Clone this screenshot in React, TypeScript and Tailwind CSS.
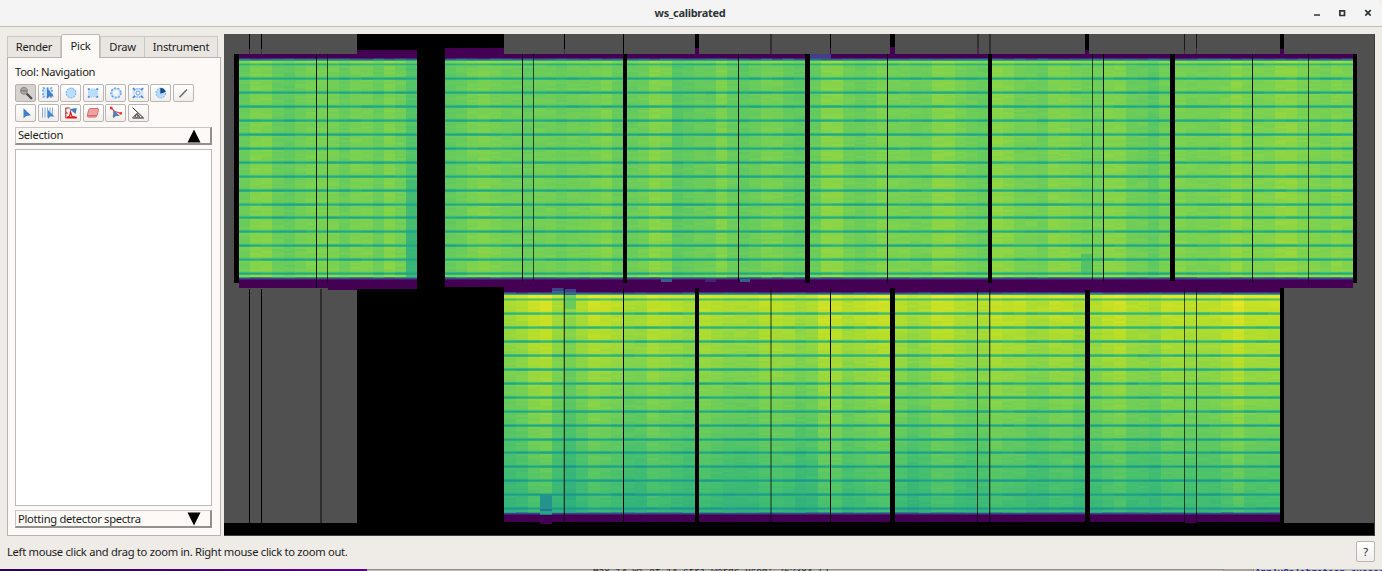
import React from "react";

const VIRIDIS: [number, number, number][] = [
  [68, 1, 84], [72, 36, 117], [65, 68, 135], [53, 95, 141], [42, 120, 142],
  [33, 145, 140], [34, 168, 132], [68, 191, 112], [122, 209, 81], [189, 223, 38], [253, 231, 37],
];
function viridis(v: number) {
  const t = Math.max(0, Math.min(0.9999, v)) * 10;
  const i = Math.floor(t);
  const f = t - i;
  const c = VIRIDIS[i].map((a, k) => Math.round(a + (VIRIDIS[i + 1][k] - a) * f));
  return `rgb(${c[0]},${c[1]},${c[2]})`;
}
function noise(a: number, b: number) {
  const s = Math.sin(a * 127.1 + b * 311.7) * 43758.5453;
  return s - Math.floor(s) - 0.5;
}

type Bank = { x0: number; x1: number; levels: string; lower?: boolean; boost?: number };
const BANKS: Bank[] = [
  { x0: 239, x1: 417, levels: "4774356664664751" },
  { x0: 445, x1: 623, levels: "3467655455455674" },
  { x0: 627, x1: 805, levels: "4587234474346643" },
  { x0: 810, x1: 988, levels: "4885457665588654" },
  { x0: 992, x1: 1170, levels: "8755477655774425", boost: 0.006 },
  { x0: 1175, x1: 1353, levels: "6555686668866576", boost: 0.01 },
  { x0: 504, x1: 695, levels: "4589425876447654", lower: true },
  { x0: 699, x1: 890, levels: "6544466534885678", lower: true, boost: 0.004 },
  { x0: 895, x1: 1085, levels: "5347754576644664", lower: true, boost: 0.01 },
  { x0: 1090, x1: 1280, levels: "4674436655579666", lower: true, boost: 0.016 },
];

function BankView({ x0, x1, levels, lower, boost = 0 }: Bank) {
  const out: React.ReactElement[] = [];
  const n = 16;
  const w = (x1 - x0) / n;
  const top = lower ? 294 : 60;
  const first = lower ? 299 : 64;
  const pitch = 13.95;
  const put = (x: number, xe: number, y: number, h: number, v: number) =>
    out.push(<rect key={out.length} x={x} y={y} width={xe - x} height={h} fill={viridis(v)} />);
  for (let c = 0; c < n; c++) {
    const xa = Math.round(x0 + c * w);
    const xb = Math.round(x0 + (c + 1) * w);
    const d = (Number(levels[c]) - 5) * 0.013 + boost;
    const at = (k: number) => (lower ? 0.888 - k * 0.0152 : 0.775 + k * 0.0012) + d;
    put(xa, xb, top - 2, 1, 0.13 + noise(c, x0) * 0.08);
    put(xa, xb, top - 1, 1, 0.36 + noise(c, x0) * 0.16);
    put(xa, xb, top, 1, 0.6);
    put(xa, xb, top + 1, first - top - 2, at(0) + 0.05);
    for (let k = 0; k < 16; k++) {
      const y = Math.round(first + k * pitch);
      const v = at(k);
      const stripe = 0.59 + (v - 0.78) * 0.55 + noise(c + 3, k) * 0.04;
      const last = k === 15;
      put(xa, xb, y - 1, 1, stripe + (k ? 0.09 : 0.14));
      put(xa, xb, y, 1, stripe + (k ? 0 : 0.05));
      put(xa, xb, y + 1, 1, stripe + (k ? 0.06 : 0.14));
      if (last) {
        put(xa, xb, y + 2, 2, v + (lower ? -0.01 : 0.03));
        put(xa, xb, y + 4, 1, 0.5 + noise(c, x0) * 0.2);
        put(xa, xb, y + 5, 1, 0.2);
        put(xa, xb, y + 6, 1, 0.08);
      } else {
        for (let r = 0; r < 6; r++) {
          put(xa, xb, y + 2 + r * 2, 2, v + noise(c + x0, k * 6 + r) * 0.022 - r * (lower ? 0.0015 : 0));
        }
        const ny = Math.round(first + (k + 1) * pitch);
        put(xa, xb, ny - 2, 1, v - 0.015);
      }
    }
  }
  return <g>{out}</g>;
}

type Box = [number, number, number, number];
const boxes = (list: Box[], fill: string, opacity = 1) =>
  list.map(([x, y, w, h], i) => <rect key={fill + i} x={x} y={y} width={w} height={h} fill={fill} opacity={opacity} />);

const PURPLE = "#440154";

function DetectorMap() {
  return (
    <svg width="1151" height="502" viewBox="224 34 1151 502" shapeRendering="crispEdges" className="block">
      <rect x="224" y="34" width="1151" height="502" fill="#000" />
      {boxes([[224, 34, 133, 489], [504, 34, 871, 20], [1284, 280, 91, 243], [1353, 54, 22, 230]], "#505050")}
      {boxes([[239, 54, 178, 234], [328, 288, 89, 1], [357, 50, 60, 6], [445, 48, 59, 6], [445, 54, 908, 233], [504, 280, 780, 242], [1284, 287, 69, 1]], PURPLE)}
      {boxes([[328, 288, 29, 2], [540, 519, 12, 5], [1185, 522, 12, 1]], PURPLE)}
      {BANKS.map((b) => <BankView key={b.x0 + (b.lower ? "l" : "u")} {...b} />)}
      {boxes([[810, 54, 21, 4]], "#433e85")}
      {boxes([[810, 58, 21, 1]], "#3d4e8a")}
      {boxes([[552, 288, 12, 3], [564, 289, 12, 3]], "#404387")}
      {boxes([[552, 291, 12, 3], [564, 292, 12, 3]], "#2f6b8e")}
      {boxes([[564, 295, 12, 14]], "#52c569", 0.65)}
      {boxes([[661, 279, 11, 3], [740, 279, 10, 3]], "#355f8d")}
      {boxes([[705, 279, 11, 3]], "#443a83", 0.6)}
      {boxes([[540, 494, 12, 15]], "#24938b")}
      {boxes([[540, 509, 12, 2]], "#2c738e")}
      {boxes([[540, 511, 12, 3]], "#22a884")}
      {boxes([[540, 514, 12, 1]], "#2f6b8e")}
      {boxes([[1081, 254, 11, 19]], "#35b779", 0.55)}
      {boxes([[406, 180, 11, 98]], "#22a884", 0.35)}
      {boxes([[406, 230, 11, 48]], "#22a884", 0.35)}

      {boxes([[234, 54, 5, 229], [623, 54, 4, 229], [805, 54, 5, 229], [988, 54, 4, 229], [1170, 54, 5, 227], [1353, 54, 4, 229]], "#000")}
      {boxes([[695, 288, 4, 235], [890, 288, 5, 235], [1085, 290, 5, 233], [1280, 288, 4, 235]], "#000")}
      {boxes([[417, 34, 28, 489]], "#000")}
      {boxes([[695, 34, 4, 14], [890, 34, 5, 13], [1085, 34, 4, 16], [1280, 34, 4, 15]], "#000")}
      {boxes([[695, 48, 4, 6], [890, 47, 5, 7], [1085, 50, 4, 4], [1280, 49, 4, 5], [830, 48, 1, 6]], PURPLE)}
      {boxes([[249, 34, 1, 15], [261, 34, 1, 15], [564, 34, 1, 15], [623, 34, 1, 20], [830, 34, 1, 14]], "#000")}
      {boxes([[770, 34, 2, 15], [977, 34, 2, 14], [989, 34, 2, 20]], "#000", 0.4)}
      {boxes([[1184, 34, 1, 16], [1196, 34, 1, 14]], "#000", 0.7)}
      {boxes([[249, 49, 1, 5], [261, 49, 1, 5], [564, 49, 1, 5], [770, 49, 2, 5], [977, 48, 2, 6], [1184, 50, 1, 4], [1196, 48, 1, 6]], PURPLE, 0.55)}
      {boxes([[316, 54, 1, 234], [738, 54, 1, 229], [887, 54, 1, 229], [1103, 54, 1, 228], [1252, 54, 1, 229], [522, 54, 1, 228]], "#000", 0.9)}
      {boxes([[327, 54, 1, 229], [533, 54, 1, 227], [1092, 54, 1, 226], [1308, 54, 1, 229]], "#000", 0.65)}
      {boxes([[249, 289, 1, 234], [261, 289, 1, 234]], "#000")}
      {boxes([[320, 289, 2, 234]], "#000", 0.45)}
      {boxes([[623, 288, 1, 234], [830, 288, 1, 234]], "#000")}
      {boxes([[564, 288, 1, 234], [977, 288, 1, 234], [989, 288, 1, 234], [1184, 288, 1, 234], [1196, 288, 1, 234]], "#000", 0.68)}
      {boxes([[770, 288, 2, 234]], "#000", 0.38)}
      {boxes([[563, 288, 1, 234], [990, 288, 1, 234]], "#000", 0.22)}
      {boxes([[224, 535, 1151, 1], [1374, 34, 1, 502]], "#3c3c3c")}
    </svg>
  );
}

const ICONS: React.ReactNode[] = [
  <g key="zoom">
    <path d="M8.8 8.8 L13.3 13.2" stroke="#4c4c4c" strokeWidth="2.3" strokeLinecap="round" />
    <circle cx="6" cy="5.8" r="3.5" fill="#a5a5a3" stroke="#8c8c8a" />
    <path d="M3 5.8h6" stroke="#74746f" />
  </g>,
  <g key="edit">
    <rect x="3" y="3" width="9" height="9" fill="#c9e4ff" stroke="#3d84dc" strokeWidth="1.2" strokeDasharray="2 1.6" />
    <path d="M7 2.5 L7 13.8 L9.5 11.6 L13.8 11.5 Z" fill="#427fc6" />
  </g>,
  <circle key="ellipse" cx="8" cy="8" r="4.9" fill="#b9ddff" stroke="#6fa8f0" strokeDasharray="2 1" />,
  <g key="rect">
    <rect x="3.5" y="4" width="9" height="8" fill="#b9ddff" stroke="#a4cdf8" strokeDasharray="1.5 1" />
    <path d="M2.8 3.2h1.8v1.8h-1.8zM11.4 3.2h1.8v1.8h-1.8zM2.8 11h1.8v1.8h-1.8zM11.4 11h1.8v1.8h-1.8z" fill="#4e8be0" />
  </g>,
  <g key="ring" fill="none">
    <circle cx="8" cy="8" r="4.2" stroke="#b9dcff" strokeWidth="2.2" />
    <circle cx="8" cy="8" r="5" stroke="#5a96e8" strokeWidth="1.2" strokeDasharray="2 1.5" />
  </g>,
  <g key="rectring" fill="none">
    <rect x="3.8" y="4.2" width="8.4" height="7.6" stroke="#c4e1ff" strokeWidth="2" />
    <path d="M2.8 3.2l2.4 2M13.2 3.2l-2.4 2M2.8 12.8l2.4-2M13.2 12.8l-2.4-2" stroke="#4e83ca" strokeWidth="1.5" />
    <path d="M6.5 3.8h1M9 3.8h1M6.5 12.2h1M9 12.2h1" stroke="#5a96e8" />
    <circle cx="8" cy="8" r="2" fill="#fff" stroke="#5f9bea" />
  </g>,
  <g key="sector">
    <circle cx="7.8" cy="8" r="4.9" fill="#b7dafc" stroke="#83b6ed" strokeDasharray="2 1" />
    <path d="M7.3 8.7V3.1A5.4 5.4 0 0 1 12.6 7Z" fill="#174b87" />
  </g>,
  <path key="pen" d="M4.5 12.3 L12 4.4" stroke="#6a6a6a" strokeWidth="1.5" />,
  <path key="single" d="M5.5 3.2 L5.5 13.2 L8.3 11 L13 10.2 Z" fill="#3f7fcb" />,
  <g key="tube">
    <path d="M2.5 2.5v10M5 2.5v10M7.5 2.5v10M10 2.5v8M12.5 2.5v9" stroke="#78a2d8" strokeWidth="0.9" />
    <path d="M8 5v9l2.2-2.4H14.5Z" fill="#4785cc" />
  </g>,
  <g key="peak">
    <path d="M3.4 12.6h10.4" stroke="#e01212" strokeWidth="1.8" fill="none" />
    <path d="M4.5 12l2-.6 1-4.6 1.6 4.8 3.4.5" fill="none" stroke="#e41818" strokeWidth="1.2" />
    <path d="M2.8 2.8v10.5M2.8 3h4M2.8 8h2" stroke="#a32222" strokeWidth="1" fill="none" />
    <path d="M6.5 4l7.3 -1-1.2 6Z" fill="#427fc1" />
  </g>,
  <g key="erase">
    <path d="M5.5 3.5h6.5q1.8 0 1.4 1.4l-1.3 5.6q-.4 1.6-2.1 1.6H3.7q-1.8 0-1.4-1.4l1.3-5.5Q4 3.5 5.5 3.5Z" fill="#eda3a3" stroke="#d96b6b" />
    <path d="M2.6 10.6h9" stroke="#cf6666" />
  </g>,
  <g key="compare">
    <path d="M3.2 2.8l3.3 3.6 6.5 2M6.5 6.4L5.3 12" stroke="#f15252" strokeWidth="1.4" fill="none" />
    <path d="M5.3 4.8v8.7l2.5-2.5h4Z" fill="#4c80bb" />
    <path d="M2 1.8h2.4v2.4H2zM11.6 7.2h2.4v2.4h-2.4z" fill="#f52626" />
  </g>,
  <g key="angle" fill="none" stroke="#242424">
    <path d="M2.5 2.5L13.5 13H2.5M3 12.5L7.5 8M6 9.5q3.5 0 3.5 3" />
    <circle cx="6.7" cy="11" r="1.4" stroke="#555" />
  </g>,
];

function ToolButton({ index }: { index: number }) {
  return (
    <button
      className={`flex h-[18px] w-[21px] items-center justify-center rounded-[2px] border ${
        index === 0 ? "border-[#b5b1ac] bg-[#d6d2ce]" : "border-[#bab6b2] bg-gradient-to-b from-white to-[#f0edea]"
      }`}
    >
      <svg width="16" height="16" viewBox="0 0 16 16" className="shrink-0">{ICONS[index]}</svg>
    </button>
  );
}

function SectionHeader({ label, up }: { label: string; up?: boolean }) {
  return (
    <div className="flex h-[18px] w-[197px] items-center justify-between border border-r-2 border-b-2 border-[#c9c5c1] border-r-[#93918b] border-b-[#93918b] bg-[#fcf9f6] pr-[9px] pl-[2px]">
      <span className={`leading-none whitespace-nowrap ${up ? "pb-[1px]" : "pt-[1px]"}`}>{label}</span>
      <svg width="14" height="14" viewBox="0 0 14 14" className="shrink-0">
        <path d={up ? "M7 0.5L13.5 13.5H.5Z" : "M7 13.5L13.5.5H.5Z"} fill="#000" />
      </svg>
    </div>
  );
}

export default function App() {
  const tab = "flex items-center justify-center border border-b-0 border-[#cbc7c2] bg-[#e9e6e2] h-[21px] pb-[1px]";
  return (
    <div className="flex h-[571px] w-[1382px] flex-col overflow-hidden bg-[#efebe7] font-['Noto_Sans',sans-serif] text-[11.2px] leading-none tracking-[-0.29px] text-[#1c1c1c]">
      <header className="flex h-[27px] shrink-0 items-center rounded-tr-[5px] border-b border-[#bfbdba] bg-[#f4f4f4]">
        <div className="w-[1300px] pb-[1px] pl-[80px] text-center text-[11px] font-bold tracking-[-0.3px] text-[#303436]">ws_calibrated</div>
        <svg width="82" height="26" viewBox="1300 0 82 26" fill="none" stroke="#2e3436" strokeWidth="1.7">
          <path d="M1314 15h6M1339.9 10.9h4.6v4.6h-4.6zM1365.3 10.2l5.4 5.4M1370.7 10.2l-5.4 5.4" />
        </svg>
      </header>

      <div className="flex h-[509px] shrink-0 pt-[7px] pl-[7px]">
        <aside className="flex w-[217px] flex-col">
          <div className="flex h-[23px] items-end">
            <div className={`${tab} w-[54px]`}>Render</div>
            <div className="z-10 -mb-px flex h-[24px] w-[39px] items-center justify-center rounded-t-[2px] border border-b-0 border-[#bdb8b3] bg-[#fcf9f6] pb-[2px]">Pick</div>
            <div className={`${tab} w-[45px]`}>Draw</div>
            <div className={`${tab} w-[73px] border-l-0`}>Instrument</div>
          </div>
          <div className="flex h-[479px] w-[214px] flex-col border border-[#b7b3af] bg-[#fcf9f6] pl-[7px]">
            <div className="mt-[7px] h-[19px] leading-[14px]">Tool: Navigation</div>
            <div className="grid w-[180px] grid-cols-[repeat(8,22.5px)] gap-y-[2px]">
              {ICONS.map((_, i) => <ToolButton key={i} index={i} />)}
            </div>
            <div className="mt-[5px]"><SectionHeader label="Selection" up /></div>
            <div className="mt-[4px] h-[357px] w-[197px] border border-[#bdb9b4] bg-white" />
            <div className="mt-[4px]"><SectionHeader label="Plotting detector spectra" /></div>
          </div>
        </aside>
        <main className="h-[502px] w-[1151px]"><DetectorMap /></main>
      </div>

      <footer className="flex h-[33px] shrink-0 items-center justify-between pr-[7px] pl-[7px]">
        <span className="whitespace-nowrap pb-[2px]">Left mouse click and drag to zoom in. Right mouse click to zoom out.</span>
        <button className="mb-[2px] flex h-[21px] w-[19px] items-center justify-center rounded-[2px] border border-[#b9b5b0] bg-gradient-to-b from-white to-[#f1efec]">?</button>
      </footer>
      <div className="flex h-[2px] shrink-0 overflow-hidden bg-[#bcbab8] font-['Liberation_Mono',monospace] text-[9.4px] leading-[10px] tracking-normal">
        <div className="h-[2px] w-[367px] shrink-0 bg-gradient-to-r from-[#2b0549] to-[#55008a]" />
        <div className="flex h-[2px] w-[856px] shrink-0 border-t border-[#92908e] text-[#202020]">
          <div className="-mt-[3px] ml-[226px] whitespace-nowrap">Max 14 W1 of 14 stri words used: 762384 ()</div>
        </div>
        <div className="h-[2px] w-[31px] shrink-0 border-x border-[#8d8985] bg-[#aaa39d]" />
        <div className="-mt-[1px] ml-[1px] shrink-0 whitespace-nowrap font-bold text-[#202080]">ApplyCalibration succes</div>
      </div>
    </div>
  );
}
